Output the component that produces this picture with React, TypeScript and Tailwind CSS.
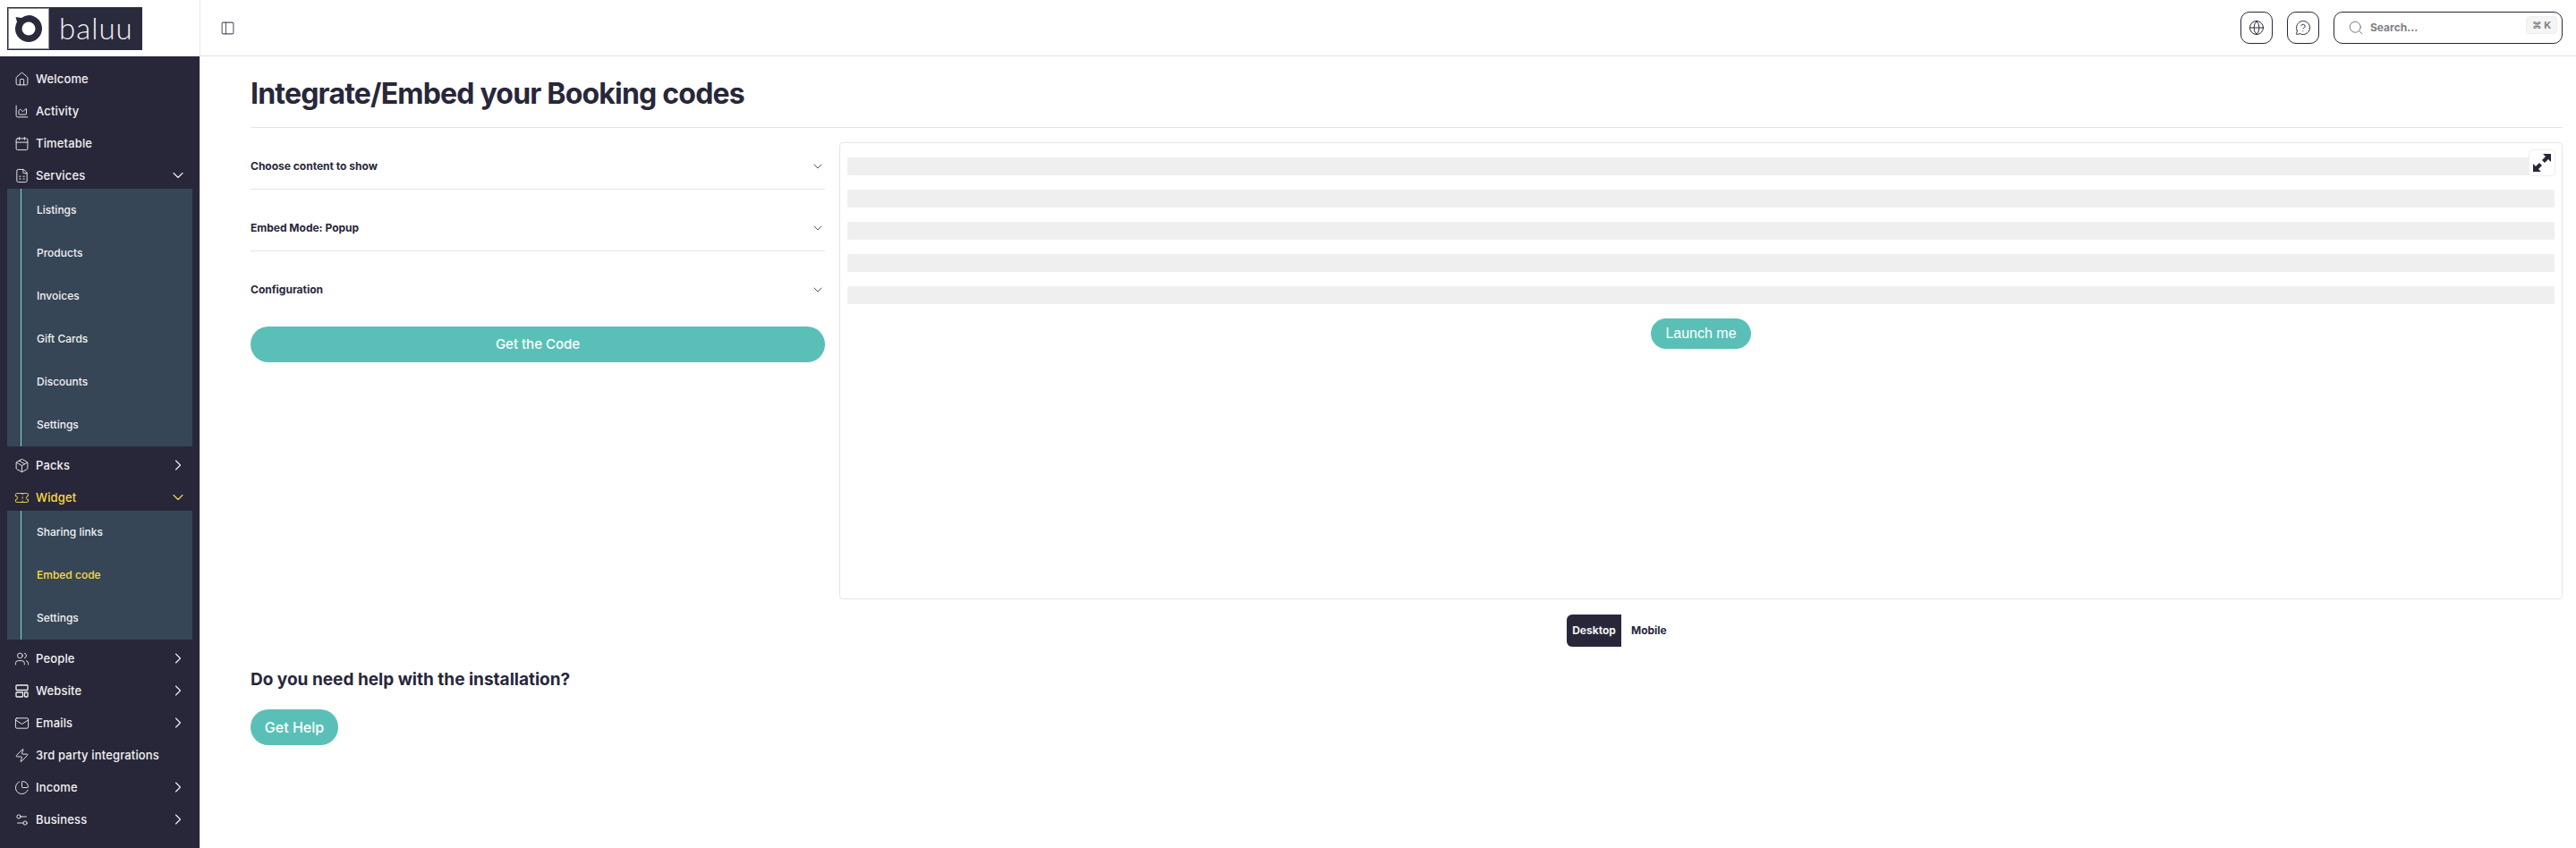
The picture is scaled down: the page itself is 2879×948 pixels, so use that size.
import React from 'react';
import {
  ChartArea,
  Calendar,
  ChevronDown,
  ChevronRight,
  FileSpreadsheet,
  Globe,
  House,
  Mail,
  MessageCircleQuestion,
  Package,
  PanelLeft,
  ChartPie,
  Search,
  Settings2,
  Ticket,
  Users,
  Zap,
} from 'lucide-react';

const LayoutIcon = ({ className }: { className?: string }) => (
  <svg viewBox="0 0 17 17" fill="none" stroke="currentColor" strokeWidth="1.3" className={className}>
    <rect x="2" y="2" width="13" height="5.500" rx="0.800" />
    <rect x="2" y="10" width="7.500" height="5" rx="0.800" />
    <rect x="11.500" y="10" width="3.500" height="5" rx="0.800" />
  </svg>
);

const ExpandIcon = ({ className }: { className?: string }) => (
  <svg viewBox="0 0 20 20" fill="currentColor" className={className}>
    <path d="M11 0h9v9l-3-3-4 4-3-3 4-4z" />
    <path d="M9 20H0v-9l3 3 4-4 3 3-4 4z" />
  </svg>
);

const MenuRow = ({ icon: Icon, label, chevron, active }: any) => (
  <div className={`flex h-9 items-center pr-[14px] pl-4 text-[13px] font-medium tracking-[0.15px] ${active ? 'text-[#fcdc3d]' : 'text-[#f2f2f2]'}`}>
    <Icon className="mr-[7px] h-[17px] w-[17px] shrink-0" strokeWidth={1.3} />
    <span className="flex-1 pt-[1px] whitespace-nowrap">{label}</span>
    {chevron === 'down' && <ChevronDown className="h-5 w-5" strokeWidth={1.3} />}
    {chevron === 'right' && <ChevronRight className="h-5 w-5" strokeWidth={1.3} />}
  </div>
);

const SubMenu = ({ items, active }: { items: string[]; active?: string }) => (
  <div className="mx-2 mt-[-3px] mb-[3px] bg-[#364657]">
    <div className="ml-[15px] border-l border-[#7ddbd0]">
      {items.map((item, i) => (
        <div
          key={i}
          className={`flex h-12 items-center pl-[17px] text-[12px] font-medium ${item === active ? 'text-[#fcdc3d]' : 'text-[#f2f2f2]'}`}
        >
          {item}
        </div>
      ))}
    </div>
  </div>
);

const AccordionRow = ({ title, last }: { title: string; last?: boolean }) => (
  <div className={`flex items-center justify-between pt-[31px] pb-[13px] ${last ? 'border-b border-transparent' : 'border-b border-[#e5e5e5]'}`}>
    <span className="text-[12px] leading-6 font-bold text-[#28273a]">{title}</span>
    <ChevronDown className="h-4 w-4 text-[#55556a]" strokeWidth={1.5} />
  </div>
);

export default function App() {
  const bars = [0, 1, 2, 3, 4];

  return (
    <div className="flex h-screen overflow-hidden bg-white font-['Inter',sans-serif] text-[#28273a]">
      <aside className="flex w-[223px] shrink-0 flex-col">
        <div className="flex h-[63px] items-center px-2">
          <div className="flex h-12 w-[151px] items-center bg-[#2a2a3d] pl-[1px]">
            <div className="flex h-[46px] w-[46px] items-center justify-center border border-[#8f8f9a] bg-white">
              <svg viewBox="0 0 32 32" className="h-[32px] w-[32px]">
                <path d="M16 1a15 15 0 1 1-13 7.500L1.500 3l6.500 1A15 15 0 0 1 16 1z" fill="#2a2a3d" />
                <circle cx="16" cy="16" r="7.500" fill="#fff" />
              </svg>
            </div>
            <span className="ml-[11px] font-['Lato',sans-serif] text-[33px] leading-none font-light tracking-[1px] text-[#f4f4f4]">baluu</span>
          </div>
        </div>
        <nav className="flex-1 bg-[#28273a] pt-[7px]">
          <MenuRow icon={House} label="Welcome" />
          <MenuRow icon={ChartArea} label="Activity" />
          <MenuRow icon={Calendar} label="Timetable" />
          <MenuRow icon={FileSpreadsheet} label="Services" chevron="down" />
          <SubMenu items={['Listings', 'Products', 'Invoices', 'Gift Cards', 'Discounts', 'Settings']} />
          <MenuRow icon={Package} label="Packs" chevron="right" />
          <MenuRow icon={Ticket} label="Widget" chevron="down" active />
          <SubMenu items={['Sharing links', 'Embed code', 'Settings']} active="Embed code" />
          <MenuRow icon={Users} label="People" chevron="right" />
          <MenuRow icon={LayoutIcon} label="Website" chevron="right" />
          <MenuRow icon={Mail} label="Emails" chevron="right" />
          <MenuRow icon={Zap} label="3rd party integrations" />
          <MenuRow icon={ChartPie} label="Income" chevron="right" />
          <MenuRow icon={Settings2} label="Business" chevron="right" />
        </nav>
      </aside>

      <div className="flex min-w-0 flex-1 flex-col border-l border-[#e8e8e8]">
        <header className="flex h-[63px] shrink-0 items-center border-b border-[#e5e5e5] pr-[15px] pl-[22px]">
          <PanelLeft className="h-[17px] w-[17px] text-[#55556a]" strokeWidth={1.5} />
          <div className="ml-auto flex items-center">
            <button className="flex h-9 w-9 items-center justify-center rounded-[10px] border border-[#28273a]">
              <Globe className="h-[18px] w-[18px]" strokeWidth={1.3} />
            </button>
            <button className="ml-4 flex h-9 w-9 items-center justify-center rounded-[10px] border border-[#28273a]">
              <MessageCircleQuestion className="h-[18px] w-[18px]" strokeWidth={1.3} />
            </button>
            <div className="ml-4 flex h-9 w-64 items-start rounded-[10px] border border-[#28273a] pr-[5px] pl-[15px]">
              <Search className="mt-[8px] h-[18px] w-[18px] text-[#77777f]" strokeWidth={1.3} />
              <span className="mt-[8px] ml-[7px] flex-1 text-[12px] leading-[18px] font-bold text-[#808086]">Search...</span>
              <kbd className="mt-1 flex h-5 w-[35px] items-center justify-center rounded-[4px] border border-[#eeeeee] bg-[#f5f5f5] font-['Inter',sans-serif] text-[11px] font-bold text-[#808086]">⌘ K</kbd>
            </div>
          </div>
        </header>

        <main className="flex-1 pr-[15px] pl-[56px]">
          <div className="flex h-[80px] items-center border-b border-[#e5e5e5] pt-[4px]">
            <h1 className="text-[32px] leading-10 font-bold tracking-[-0.8px]">Integrate/Embed your Booking codes</h1>
          </div>

          <div className="flex gap-4">
            <div className="w-[642px] shrink-0">
              <AccordionRow title="Choose content to show" />
              <AccordionRow title="Embed Mode: Popup" />
              <AccordionRow title="Configuration" last />
              <button className="mt-[15px] h-10 w-full rounded-full bg-[#5ac0b7] pt-[1px] text-[15px] font-medium text-white">Get the Code</button>
            </div>

            <div className="min-w-0 flex-1 pt-4">
              <div className="relative h-[511px] rounded border border-[#e5e5e5] px-2 pt-4">
                <div className="flex flex-col gap-4">
                  {bars.map((b) => (
                    <div key={b} className="h-5 rounded-[2px] bg-[#efefef]" />
                  ))}
                </div>
                <div className="mt-4 flex justify-center">
                  <button className="h-[34px] w-28 rounded-full bg-[#5ac0b7] font-['Liberation_Sans',sans-serif] text-[16px] text-white">Launch me</button>
                </div>
                <button className="absolute top-[7px] right-[7px] flex h-[30px] w-[30px] items-center justify-center rounded-[4px] border border-[#eeeeee] bg-white">
                  <ExpandIcon className="h-5 w-5" />
                </button>
              </div>
              <div className="mt-[17px] flex items-center pl-[813px] text-[12px] font-bold">
                <span className="flex h-9 w-[61px] items-center justify-center rounded-l-md bg-[#28273a] text-[#f2f2f2]">Desktop</span>
                <span className="ml-[11px]">Mobile</span>
              </div>
            </div>
          </div>

          <h2 className="mt-[23px] text-[19px] leading-7 font-bold">Do you need help with the installation?</h2>
          <button className="mt-[19px] h-10 w-[98px] rounded-full bg-[#5ac0b7] text-[16px] font-medium text-white">Get Help</button>
        </main>
      </div>
    </div>
  );
}
